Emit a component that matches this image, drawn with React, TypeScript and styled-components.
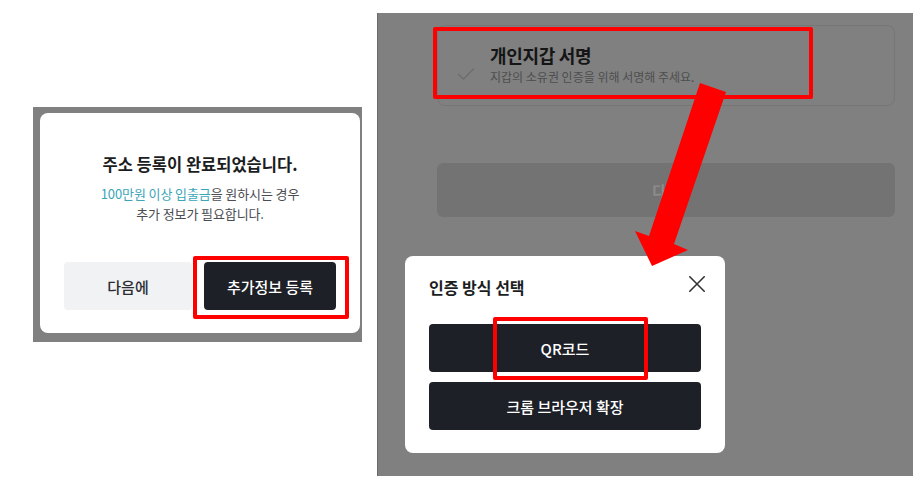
import React from 'react'
import styled, {createGlobalStyle} from 'styled-components'

const GlobalStyle = createGlobalStyle`
    html, body {
        margin:0;
        padding:0;
        background:#fff;
    }
    body {
        font-family:"Noto Sans CJK KR", "Noto Sans", sans-serif;
        color:#1d2027;
    }
    * {
        box-sizing:border-box;
    }
`

const Page = styled.div`
    width:918px;
    height:481px;
    display:flex;
    align-items:flex-start;
    overflow:hidden;
`

const Shot = styled.div`
    position:relative;
    background:#808080;
    flex-shrink:0;
`

const LeftShot = styled(Shot)`
    margin:107px 0 0 33px;
    width:329px;
    height:235px;
    padding:6px 2px 9px 7px;
`

const RightShot = styled(Shot)`
    margin:13px 0 0 15px;
    width:536px;
    height:463px;
    padding:12px 18px 0 59px;
    border-left:1px solid #6a6a6a;
`

const Dialog = styled.div`
    width:320px;
    height:220px;
    background:#fff;
    border-radius:8px;
    padding:39px 24px 23px;
    display:flex;
    flex-direction:column;
    align-items:center;
`

const DialogTitle = styled.div`
    font-size:16.5px;
    line-height:24px;
    font-weight:700;
    color:#1b1d22;
`

const DialogText = styled.p`
    margin:8px 0 0;
    font-size:13px;
    line-height:20px;
    text-align:center;
    color:#4a4d52;
    letter-spacing:-0.1px;
    em {
        font-style:normal;
        color:#3aa6b8;
    }
`

const ButtonRow = styled.div`
    margin-top:38px;
    width:100%;
    display:grid;
    grid-template-columns:128px 1fr;
    gap:12px;
`

const Button = styled.button<{$variant?: 'light' | 'dark'}>`
    height:48px;
    border:none;
    border-radius:4px;
    font-family:inherit;
    font-size:15px;
    font-weight:500;
    background:${p => p.$variant === 'light' ? '#f1f2f4' : '#1d2027'};
    color:${p => p.$variant === 'light' ? '#2a2d33' : '#fff'};
    cursor:pointer;
`

const StepCard = styled.div`
    height:81px;
    border:1px solid #767676;
    border-radius:8px;
    padding:18px 20px 0 19px;
    display:flex;
    align-items:flex-start;
    gap:15px;
    .check {
        margin-top:23px;
    }
`

const StepText = styled.div`
    display:flex;
    flex-direction:column;
    gap:2px;
`

const StepTitle = styled.div`
    font-size:18px;
    line-height:22px;
    font-weight:700;
    color:#151515;
    letter-spacing:-0.3px;
`

const StepDesc = styled.div`
    font-size:12px;
    line-height:18px;
    color:#4e4e4e;
`

const DimButton = styled.div`
    margin-top:57px;
    height:54px;
    border-radius:6px;
    background:#737373;
    color:#8c8c8c;
    font-size:15px;
    font-weight:600;
    display:flex;
    align-items:center;
    justify-content:center;
`

const Sheet = styled.div`
    position:absolute;
    left:27px;
    top:243px;
    width:320px;
    height:197px;
    background:#fff;
    border-radius:8px;
    padding:20px 24px 23px;
    display:flex;
    flex-direction:column;
`

const SheetHeader = styled.div`
    display:flex;
    justify-content:space-between;
    align-items:flex-start;
    margin-bottom:26px;
`

const SheetTitle = styled.div`
    font-size:16px;
    line-height:22px;
    font-weight:600;
    color:#1b1d22;
`

const CloseButton = styled.button`
    border:none;
    background:none;
    padding:0;
    margin-right:-4px;
    width:16px;
    height:16px;
    display:flex;
    cursor:pointer;
`

const ButtonStack = styled.div`
    display:flex;
    flex-direction:column;
    gap:10px;
`

const Highlight = styled.div<{$x: number; $y: number; $w: number; $h: number}>`
    position:absolute;
    left:${p => p.$x}px;
    top:${p => p.$y}px;
    width:${p => p.$w}px;
    height:${p => p.$h}px;
    border:4px solid #ff0000;
    border-radius:2px;
    pointer-events:none;
`

const ArrowLayer = styled.svg`
    position:absolute;
    left:0;
    top:0;
    width:100%;
    height:100%;
    pointer-events:none;
    overflow:visible;
`

const CheckMark = () => (
    <svg className="check" width="18" height="14" viewBox="0 0 18 14" fill="none">
        <path d="M1.5 7.5 L6.5 12 L16.5 2" stroke="#6d6d6d" strokeWidth="1.5" strokeLinecap="round" strokeLinejoin="round"/>
    </svg>
)

const CloseIcon = () => (
    <svg width="16" height="16" viewBox="0 0 16 16" fill="none">
        <path d="M0.8 0.8 L15.2 15.2 M15.2 0.8 L0.8 15.2" stroke="#333" strokeWidth="1.6" strokeLinecap="round"/>
    </svg>
)

const App = () => {
    return (
        <Page>
            <GlobalStyle/>
            <LeftShot>
                <Dialog>
                    <DialogTitle>주소 등록이 완료되었습니다.</DialogTitle>
                    <DialogText>
                        <em>100만원 이상 입출금</em>을 원하시는 경우<br/>
                        추가 정보가 필요합니다.
                    </DialogText>
                    <ButtonRow>
                        <Button $variant="light">다음에</Button>
                        <Button $variant="dark">추가정보 등록</Button>
                    </ButtonRow>
                </Dialog>
                <Highlight $x={160} $y={149} $w={156} $h={63}/>
            </LeftShot>

            <RightShot>
                <StepCard>
                    <CheckMark/>
                    <StepText>
                        <StepTitle>개인지갑 서명</StepTitle>
                        <StepDesc>지갑의 소유권 인증을 위해 서명해 주세요.</StepDesc>
                    </StepText>
                </StepCard>
                <DimButton>다음</DimButton>

                <Sheet>
                    <SheetHeader>
                        <SheetTitle>인증 방식 선택</SheetTitle>
                        <CloseButton aria-label="닫기"><CloseIcon/></CloseButton>
                    </SheetHeader>
                    <ButtonStack>
                        <Button $variant="dark">QR코드</Button>
                        <Button $variant="dark">크롬 브라우저 확장</Button>
                    </ButtonStack>
                </Sheet>

                <Highlight $x={55} $y={14} $w={380} $h={72}/>
                <Highlight $x={115} $y={304} $w={155} $h={63}/>
                <ArrowLayer viewBox="0 0 535 463">
                    <polygon
                        points="322,70 348,79 296,231 310,237 274,253 257,218 271,223"
                        fill="#ff0000"
                    />
                </ArrowLayer>
            </RightShot>
        </Page>
    )
}

export default App
